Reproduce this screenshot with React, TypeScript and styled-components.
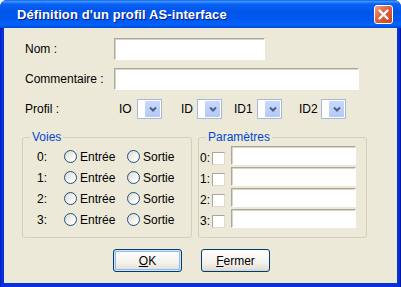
import React from 'react';
import styled, { createGlobalStyle } from 'styled-components';

const GlobalStyle = createGlobalStyle`
  html, body { margin: 0; padding: 0; background: #ffffff; }
  body { font-family: "Liberation Sans", Arial, sans-serif; font-size: 12px; color: #000; }
  * { box-sizing: border-box; }
`;

const Frame = styled.div`
  width: 401px;
  height: 287px;
  display: flex;
  flex-direction: column;
  background: linear-gradient(to right, #0019cf, #0831d9 2px, #0831d9 calc(100% - 2px), #001090);
  border-radius: 7px 7px 0 0;
  overflow: hidden;
`;

const TitleBar = styled.div`
  height: 28px;
  flex: none;
  display: flex;
  align-items: center;
  justify-content: space-between;
  padding: 0 8px 0 17px;
  background: linear-gradient(
    #0a5ee6 0%,
    #3d95ff 5%,
    #0a62f4 14%,
    #0055ea 40%,
    #0058ee 70%,
    #0062fa 88%,
    #0048d8 100%
  );
`;

const Title = styled.span`
  font-weight: bold;
  font-size: 13px;
  color: #fff;
  text-shadow: 1px 1px 0 #0a1e80;
  letter-spacing: 0.1px;
`;

const CloseButton = styled.div`
  width: 19px;
  height: 19px;
  border: 1px solid #fff;
  border-radius: 3px;
  background: linear-gradient(135deg, #f0a08a, #e2623c 45%, #c9401c);
  display: flex;
  align-items: center;
  justify-content: center;
`;

const Client = styled.div`
  flex: 1;
  margin: 0 4px 4px;
  background: #ece9d8;
  padding: 10px 0 0 18px;
  display: flex;
  flex-direction: column;
`;

const FormGrid = styled.div`
  display: grid;
  grid-template-columns: 89px auto;
  row-gap: 8px;
  padding-left: 3px;
  align-items: center;
`;

const Label = styled.span`
  white-space: nowrap;
`;

const TextField = styled.div<{ w: number; h?: number }>`
  width: ${({ w }) => w}px;
  height: ${({ h }) => h ?? 22}px;
  background: #fff;
  border-top: 1px solid #aca899;
  border-left: 1px solid #aca899;
  border-right: 1px solid #fff;
  border-bottom: 1px solid #fff;
  box-shadow: inset 1px 1px 0 #d8d5c8;
`;

const ProfilRow = styled.div`
  display: flex;
  align-items: center;
  margin-top: 1px;
`;

const Pair = styled.div<{ ml: number; lw: number }>`
  display: flex;
  align-items: center;
  margin-left: ${({ ml }) => ml}px;
  & > span { width: ${({ lw }) => lw}px; }
`;

const Select = styled.div`
  width: 25px;
  height: 20px;
  border: 1px solid #a7b9d6;
  background: #fff;
  display: flex;
  justify-content: flex-end;
  padding: 1px;
`;

const SelectButton = styled.div`
  width: 15px;
  background: linear-gradient(#c9d9fc, #b3c8f6);
  border-radius: 1px;
  display: flex;
  align-items: center;
  justify-content: center;
`;

const Groups = styled.div`
  display: flex;
  gap: 6px;
  margin-top: 18px;
`;

const Group = styled.div<{ w: number }>`
  position: relative;
  width: ${({ w }) => w}px;
  height: 101px;
  border: 1px solid #d0d0bf;
  border-radius: 3px;
`;

const Legend = styled.span`
  position: absolute;
  top: -8px;
  left: 7px;
  padding: 0 2px;
  background: #ece9d8;
  color: #0046d5;
`;

const VoiesGrid = styled.div`
  display: grid;
  grid-template-columns: 27px 63px auto;
  grid-auto-rows: 21px;
  align-items: center;
  padding: 8px 0 0 14px;
`;

const Option = styled.label`
  display: flex;
  align-items: center;
  gap: 3px;
`;

const Radio = styled.span`
  width: 13px;
  height: 13px;
  border-radius: 50%;
  border: 1px solid #1c5180;
  background: linear-gradient(135deg, #dcd9cd, #ffffff 80%);
`;

const ParamGrid = styled.div`
  display: grid;
  grid-template-columns: 12px 13px 131px;
  grid-auto-rows: 19px;
  row-gap: 2px;
  align-items: end;
  padding: 8px 0 0 1px;
`;

const RowNum = styled.span`
  line-height: 13px;
`;

const CheckBox = styled.span`
  width: 13px;
  height: 13px;
  background: #fff;
  border-top: 1px solid #aca899;
  border-left: 1px solid #aca899;
  border-right: 1px solid #dedbd0;
  border-bottom: 1px solid #dedbd0;
`;

const ParamField = styled(TextField)`
  margin-left: 6px;
`;

const ButtonRow = styled.div`
  display: flex;
  gap: 19px;
  margin: 11px 0 0 91px;
`;

const Button = styled.div<{ primary?: boolean }>`
  width: 69px;
  height: 23px;
  border: 1px solid #003c74;
  border-radius: 3px;
  background: linear-gradient(#ffffff, #f3f2ec 60%, #e4e1d8 90%, #d6d0c5);
  box-shadow: ${({ primary }) =>
    primary ? 'inset 0 0 0 1px #cee7ff, inset 0 0 0 2px #98b8ea' : 'none'};
  display: flex;
  align-items: center;
  justify-content: center;
`;

const Chevron = () => (
  <svg width="8" height="6" viewBox="0 0 8 6">
    <path d="M1 1.5 L4 4.5 L7 1.5" fill="none" stroke="#4d6185" strokeWidth="2" />
  </svg>
);

const Combo = () => (
  <Select>
    <SelectButton>
      <Chevron />
    </SelectButton>
  </Select>
);

const rows = ['0:', '1:', '2:', '3:'];

const App: React.FC = () => (
  <>
    <GlobalStyle />
    <Frame>
      <TitleBar>
        <Title>Définition d'un profil AS-interface</Title>
        <CloseButton>
          <svg width="11" height="11" viewBox="0 0 11 11">
            <path d="M1.5 1.5 L9.5 9.5 M9.5 1.5 L1.5 9.5" stroke="#fff" strokeWidth="2.4" strokeLinecap="round" />
          </svg>
        </CloseButton>
      </TitleBar>
      <Client>
        <FormGrid>
          <Label>Nom :</Label>
          <TextField w={151} />
          <Label>Commentaire :</Label>
          <TextField w={245} />
          <Label>Profil :</Label>
          <ProfilRow>
            <Pair ml={5} lw={18}>
              <Label>IO</Label>
              <Combo />
            </Pair>
            <Pair ml={19} lw={16}>
              <Label>ID</Label>
              <Combo />
            </Pair>
            <Pair ml={12} lw={23}>
              <Label>ID1</Label>
              <Combo />
            </Pair>
            <Pair ml={17} lw={22}>
              <Label>ID2</Label>
              <Combo />
            </Pair>
          </ProfilRow>
        </FormGrid>
        <Groups>
          <Group w={170}>
            <Legend>Voies</Legend>
            <VoiesGrid>
              {rows.map((r) => (
                <React.Fragment key={r}>
                  <span>{r}</span>
                  <Option>
                    <Radio />
                    Entrée
                  </Option>
                  <Option>
                    <Radio />
                    Sortie
                  </Option>
                </React.Fragment>
              ))}
            </VoiesGrid>
          </Group>
          <Group w={169}>
            <Legend>Paramètres</Legend>
            <ParamGrid>
              {rows.map((r) => (
                <React.Fragment key={r}>
                  <RowNum>{r}</RowNum>
                  <CheckBox />
                  <ParamField w={125} h={19} />
                </React.Fragment>
              ))}
            </ParamGrid>
          </Group>
        </Groups>
        <ButtonRow>
          <Button primary>
            <span>
              <u>O</u>K
            </span>
          </Button>
          <Button>
            <span>
              <u>F</u>ermer
            </span>
          </Button>
        </ButtonRow>
      </Client>
    </Frame>
  </>
);

export default App;
